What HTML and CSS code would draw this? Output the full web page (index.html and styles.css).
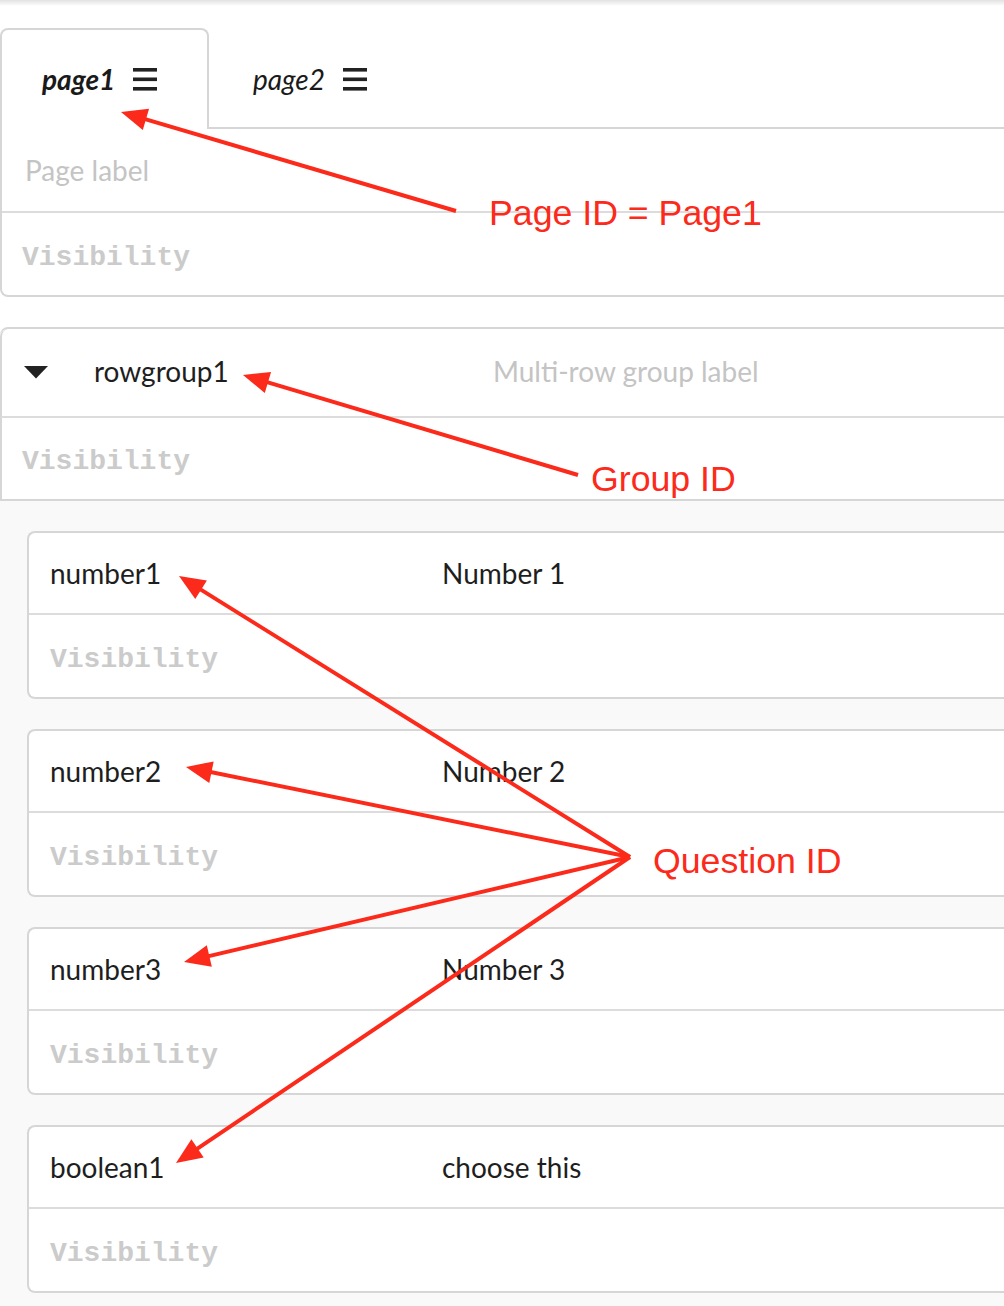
FILE: index.html
```html
<!DOCTYPE html>
<html>
<head>
<meta charset="utf-8">
<link rel="stylesheet" href="styles.css">
</head>
<body>
<div class="topshadow"></div>
<div class="page">
  <div class="tabs">
    <div class="tab tab-active">
      <span class="tab-name">page1</span>
      <svg class="burger" width="24" height="24" viewBox="0 0 24 24"><rect x="0" y="1" width="24" height="3.6" fill="#222"/><rect x="0" y="10.5" width="24" height="3.6" fill="#222"/><rect x="0" y="20" width="24" height="3.6" fill="#222"/></svg>
    </div>
    <div class="tab">
      <span class="tab-name tab-name-normal">page2</span>
      <svg class="burger" width="24" height="24" viewBox="0 0 24 24"><rect x="0" y="1" width="24" height="3.6" fill="#222"/><rect x="0" y="10.5" width="24" height="3.6" fill="#222"/><rect x="0" y="20" width="24" height="3.6" fill="#222"/></svg>
    </div>
    <div class="tab-fill"></div>
  </div>

  <div class="page-panel">
    <div class="row row-label"><span class="placeholder">Page label</span></div>
    <div class="row row-vis"><span class="vis">Visibility</span></div>
  </div>

  <div class="group">
    <div class="group-head">
      <svg class="caret" width="24" height="13" viewBox="0 0 24 13"><polygon points="0,0 24,0 12,12.5" fill="#222"/></svg>
      <span class="group-id">rowgroup1</span>
      <span class="placeholder">Multi-row group label</span>
    </div>
    <div class="group-vis"><span class="vis">Visibility</span></div>
    <div class="group-body">
      <div class="card">
        <div class="card-head"><span class="qid">number1</span><span class="qlabel">Number 1</span></div>
        <div class="card-vis"><span class="vis">Visibility</span></div>
      </div>
      <div class="card">
        <div class="card-head"><span class="qid">number2</span><span class="qlabel">Number 2</span></div>
        <div class="card-vis"><span class="vis">Visibility</span></div>
      </div>
      <div class="card">
        <div class="card-head"><span class="qid">number3</span><span class="qlabel">Number 3</span></div>
        <div class="card-vis"><span class="vis">Visibility</span></div>
      </div>
      <div class="card">
        <div class="card-head"><span class="qid">boolean1</span><span class="qlabel">choose this</span></div>
        <div class="card-vis"><span class="vis">Visibility</span></div>
      </div>
    </div>
  </div>
</div>

<svg class="annotations" width="1004" height="1306" viewBox="0 0 1004 1306">
  <g stroke="#fb2a1b" stroke-width="4" fill="none" stroke-linecap="butt">
    <line x1="456" y1="211" x2="140" y2="117.7"/>
    <line x1="578" y1="475" x2="262" y2="380.7"/>
    <line x1="630" y1="857" x2="196" y2="586.6"/>
    <line x1="630" y1="857" x2="205.6" y2="771"/>
    <line x1="630" y1="857" x2="203.5" y2="957.4"/>
    <line x1="630" y1="857" x2="192.6" y2="1151.8"/>
  </g>
  <g fill="#fb2a1b">
    <polygon points="0,0 -26,-11 -26,11" transform="translate(121 112) rotate(196.5)"/>
    <polygon points="0,0 -26,-11 -26,11" transform="translate(243 375) rotate(196.6)"/>
    <polygon points="0,0 -26,-11 -26,11" transform="translate(179 576) rotate(211.9)"/>
    <polygon points="0,0 -26,-11 -26,11" transform="translate(186 767) rotate(191.5)"/>
    <polygon points="0,0 -26,-11 -26,11" transform="translate(184 962) rotate(166.8)"/>
    <polygon points="0,0 -26,-11 -26,11" transform="translate(176 1163) rotate(146)"/>
  </g>
  <g class="note">
    <text x="489" y="225">Page ID = Page1</text>
    <text x="591" y="491">Group ID</text>
    <text x="653" y="873">Question ID</text>
  </g>
</svg>
</body>
</html>
```

FILE: styles.css
```css
html, body {
  margin: 0;
  padding: 0;
  overflow: hidden;
  background: #ffffff;
}
body {
  width: 1004px;
  height: 1306px;
  position: relative;
  font-family: Lato, "Noto Sans", sans-serif;
  color: #222222;
}
.topshadow {
  height: 6px;
  background: linear-gradient(to bottom, #e2e2e2, #ffffff);
}
.page {
  padding-top: 22px;
}
.tabs {
  display: flex;
  height: 101px;
}
.tab {
  display: flex;
  align-items: center;
  gap: 18px;
  box-sizing: border-box;
  height: 101px;
  padding-left: 44px;
  padding-top: 2px;
  border-bottom: 2px solid #d6d6d6;
  flex: 0 0 auto;
}
.tab-active {
  width: 209px;
  padding-left: 40px;
  padding-top: 0;
  padding-bottom: 2px;
  border: 2px solid #d6d6d6;
  border-bottom: none;
  border-radius: 8px 8px 0 0;
}
.tab-fill {
  flex: 1;
  border-bottom: 2px solid #d6d6d6;
}
.tab-name {
  font-size: 28px;
  font-style: italic;
  font-weight: 700;
  color: #1a1a1a;
}
.tab-name-normal {
  font-weight: 400;
}
.burger {
  display: block;
}
.page-panel {
  border-left: 2px solid #d6d6d6;
  border-bottom: 2px solid #d6d6d6;
  border-radius: 0 0 0 8px;
}
.row {
  display: flex;
  align-items: center;
  box-sizing: border-box;
  height: 82px;
}
.row-label {
  padding-left: 23px;
  height: 84px;
  border-bottom: 2px solid #dcdcdc;
}
.row-vis {
  padding-left: 20px;
  padding-top: 6px;
}
.placeholder {
  font-size: 28px;
  color: #c4c4c4;
  white-space: nowrap;
}
.vis {
  font-family: "Liberation Mono", "Courier New", monospace;
  font-weight: 700;
  font-size: 28px;
  color: #cbcbcb;
}
.group {
  margin-top: 30px;
  border-top: 2px solid #d6d6d6;
  border-radius: 8px 0 0 0;
}
.group-head {
  display: flex;
  align-items: center;
  box-sizing: border-box;
  height: 89px;
  padding-left: 22px;
  padding-bottom: 4px;
  border-left: 2px solid #d6d6d6;
  border-top-left-radius: 8px;
  border-bottom: 2px solid #dcdcdc;
}
.caret {
  display: block;
  margin-right: 46px;
  margin-top: 4px;
}
.group-id {
  font-size: 28px;
  width: 399px;
  color: #1e1e1e;
}
.group-vis {
  display: flex;
  align-items: center;
  box-sizing: border-box;
  height: 83px;
  padding-left: 20px;
  padding-top: 6px;
  border-left: 2px solid #d6d6d6;
  border-bottom: 2px solid #d6d6d6;
}
.group-body {
  background: #f9f9f9;
  padding: 30px 0 20px 27px;
  display: flex;
  flex-direction: column;
  gap: 30px;
}
.card {
  background: #ffffff;
  border: 2px solid #d6d6d6;
  border-right: none;
  border-radius: 8px 0 0 8px;
}
.card-head {
  display: flex;
  align-items: center;
  height: 80px;
  padding-left: 21px;
  border-bottom: 2px solid #dcdcdc;
}
.qid {
  font-size: 28px;
  width: 392px;
  color: #1e1e1e;
}
.qlabel {
  font-size: 28px;
  color: #1e1e1e;
}
.card-vis {
  display: flex;
  align-items: center;
  box-sizing: border-box;
  height: 82px;
  padding-left: 21px;
  padding-top: 6px;
}
.annotations {
  position: absolute;
  left: 0;
  top: 0;
  pointer-events: none;
}
.note text {
  font-family: "Liberation Sans", Arial, sans-serif;
  font-size: 35.7px;
  fill: #fb2a1b;
}
```
